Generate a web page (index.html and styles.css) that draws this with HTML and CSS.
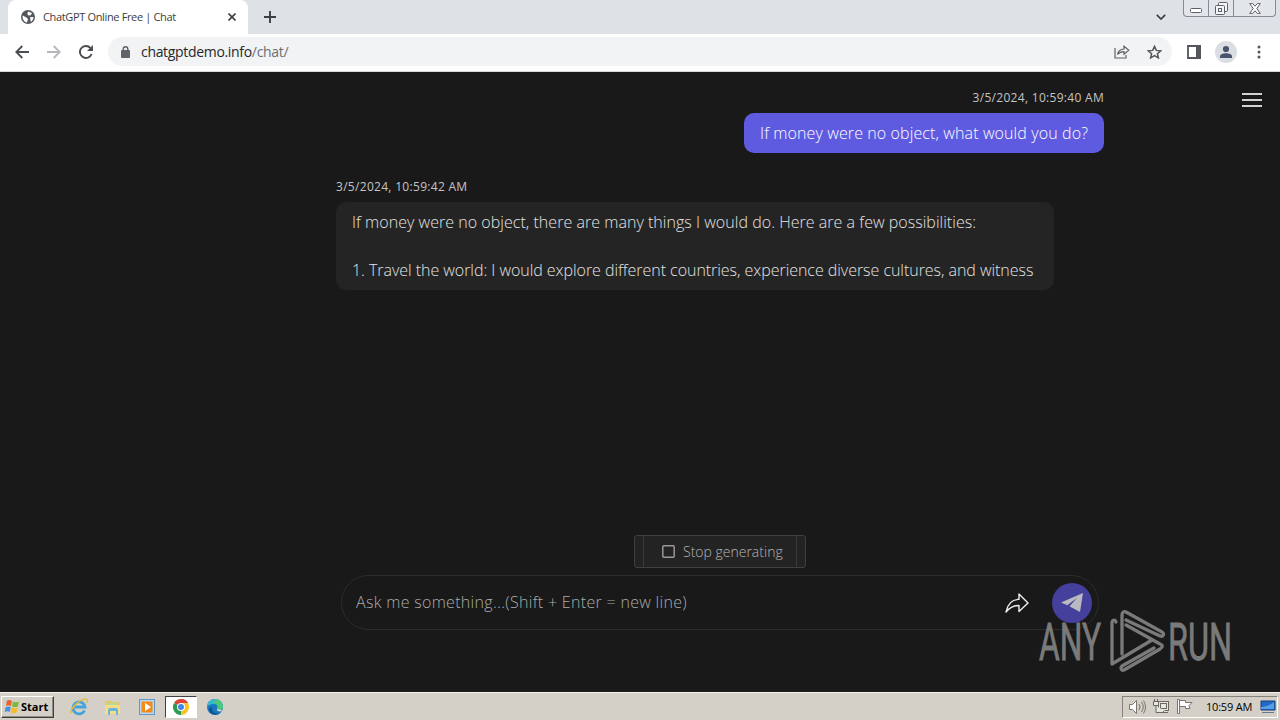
FILE: index.html
```
<!DOCTYPE html>
<html lang="en">
<head>
    <meta charset="UTF-8">
    <meta name="viewport" content="width=device-width, initial-scale=1.0">
    <title>ChatGPT Online Free | Chat</title>
    <link rel="stylesheet" href="styles.css">
</head>
<body>

<div class="tabstrip">
    <div class="tab">
        <svg class="favicon" width="14" height="14" viewBox="0 0 14 14"><circle cx="7" cy="7" r="7" fill="#54585c"/><path d="M1.6 5.5L5 7.2 7 9l-1 3.4C3 12 1.3 9.500 1.600 5.500zM7 1.600l4 1.400-1.300 2.200L7.500 5.600 6.300 4zM9 7.300l3.500-.3c0 2-1 3.800-2.700 4.900z" fill="#fff"/></svg>
        <span class="tab-title">ChatGPT Online Free | Chat</span>
        <svg class="tab-close" width="8" height="8" viewBox="0 0 8 8"><path d="M.5 .5l7 7M7.500.5l-7 7" stroke="#3c4043" stroke-width="1.600"/></svg>
    </div>
    <svg class="new-tab" width="12" height="12" viewBox="0 0 12 12"><path d="M6 0v12M0 6h12" stroke="#3c4043" stroke-width="1.900"/></svg>
    <svg class="chevron" width="10" height="6" viewBox="0 0 10 6"><path d="M.8.800L5 5 9.200.8" fill="none" stroke="#3c4043" stroke-width="1.700"/></svg>
    <div class="window-buttons">
        <span class="minimize"><svg width="12" height="5" viewBox="0 0 12 5"><rect x=".5" y=".5" width="11" height="4" rx="1" fill="#fff" stroke="#5c6068"/></svg></span>
        <span class="restore"><svg width="13" height="13" viewBox="0 0 13 13" fill="#f4f5f7" stroke="#5c6068"><rect x="3.500" y=".5" width="9" height="9" rx="1"/><rect x=".5" y="3.500" width="9" height="9" rx="1"/><rect x="3.500" y="6.500" width="3" height="3"/></svg></span>
        <span class="close"><svg width="12" height="11" viewBox="0 0 12 11"><path d="M.7.600h3L6 3.200 8.300.6h3L7.800 5.500l3.500 4.900h-3L6 7.800l-2.300 2.600h-3L4.200 5.500z" fill="#fff" stroke="#5c6068"/></svg></span>
    </div>
</div>

<div class="toolbar">
    <svg class="back" width="14" height="14" viewBox="0 0 14 14" fill="none" stroke="#4a4d51" stroke-width="1.800"><path d="M14 7H1.500M7.300 1L1.300 7l6 6"/></svg>
    <svg class="forward" width="14" height="14" viewBox="0 0 14 14" fill="none" stroke="#b5b7ba" stroke-width="1.800"><path d="M0 7h12.500M6.700 1l6 6-6 6"/></svg>
    <svg class="reload" width="14" height="14" viewBox="0 0 14 14"><path d="M12.600 9A6 6 0 1 1 11.300 2.800L13 4.500" fill="none" stroke="#4a4d51" stroke-width="1.900"/><path d="M14 0v6H8z" fill="#4a4d51"/></svg>
    <div class="omnibox">
        <svg class="lock" width="9" height="12" viewBox="0 0 9 12"><rect y="4" width="9" height="8" rx="1" fill="#5f6368"/><path d="M2.200 5V3a2.300 2.300 0 0 1 4.600 0v2" fill="none" stroke="#5f6368" stroke-width="1.400"/></svg>
        <span class="url">chatgptdemo.info<span class="path">/chat/</span></span>
        <svg class="share-page" width="16" height="14" viewBox="0 0 16 14" fill="none" stroke="#5f6368" stroke-width="1.200"><path d="M1 3v10h11v-3"/><path d="M3.500 9.500C4 6 6 4.200 10 4V1.200L14.800 5.300 10 9.300V6.600C7 6.600 5 7.500 3.500 9.500z"/></svg>
        <svg width="15" height="14" viewBox="0 0 15 14"><path d="M7.500 1.400l1.800 4 4.400.4-3.300 2.900 1 4.200-3.900-2.200-3.900 2.200 1-4.200L1.300 5.800l4.400-.4z" fill="none" stroke="#53575c" stroke-width="1.500"/></svg>
    </div>
    <svg class="side-panel" width="14" height="14" viewBox="0 0 14 14"><path d="M1 1h12v12H1z" fill="#fff" stroke="#53575c" stroke-width="1.800"/><path d="M9 0h5v14H9z" fill="#53575c"/></svg>
    <svg class="avatar" width="22" height="22" viewBox="0 0 22 22"><circle cx="11" cy="11" r="11" fill="#dadde2"/><g fill="#485370"><circle cx="11" cy="8" r="3.100"/><path d="M5 17v-1.500c0-2.200 3-3.300 6-3.300s6 1.100 6 3.300V17z"/></g></svg>
    <svg class="dots" width="4" height="14" viewBox="0 0 4 14" fill="#53575c"><circle cx="2" cy="2" r="1.500"/><circle cx="2" cy="7" r="1.500"/><circle cx="2" cy="12" r="1.500"/></svg>
</div>

<div class="page">
    <div class="hamburger"><i></i><i></i><i></i></div>

    <div class="chat">
        <div class="message mine">
            <div class="time">3/5/2024, 10:59:40 AM</div>
            <div class="bubble"><p class="question">If money were no object, what would you do?</p></div>
        </div>
        <div class="message">
            <div class="time">3/5/2024, 10:59:42 AM</div>
            <div class="bubble">
                <p class="intro">If money were no object, there are many things I would do. Here are a few possibilities:</p>
                <p class="item">1. Travel the world: I would explore different countries, experience diverse cultures, and witness</p>
            </div>
        </div>
    </div>

    <div class="composer">
        <div class="stop">
            <div class="stop-inner">
                <svg width="13" height="13" viewBox="0 0 13 13"><rect x=".8" y=".8" width="11.400" height="11.400" rx="1" fill="none" stroke="#999" stroke-width="1.500"/></svg>
                <span>Stop generating</span>
            </div>
        </div>
        <div class="input">
            <span class="placeholder">Ask me something...(Shift + Enter = new line)</span>
            <svg class="share" width="24" height="20" viewBox="0 0 24 20"><path d="M1 19C2.500 11 6 6.500 14 6.300V1l9 9-9 8.500v-6C8 12.500 4.500 14.500 1 19z" fill="none" stroke="#eee" stroke-width="1.400" stroke-linejoin="round"/></svg>
            <div class="send"><svg width="22" height="20" viewBox="0 0 22 20"><path d="M22 0L0 9.500l6.300 2.700L16 5 8.800 13v.5L19 19z" fill="#b9b9bf"/></svg></div>
        </div>
    </div>

    <svg class="watermark" width="204" height="64" viewBox="0 0 204 64">
        <g class="watermark-text">
            <text x="1" y="51" textLength="62" lengthAdjust="spacingAndGlyphs">ANY</text>
            <text x="130" y="51" textLength="64" lengthAdjust="spacingAndGlyphs">RUN</text>
        </g>
        <g fill="none" stroke="#808080" stroke-width="3.300" stroke-linejoin="round" stroke-linecap="round">
            <path d="M78 13c-1-3-4-2-4 1v41l40-24"/>
            <path d="M84 45V6c0-3 2-4 4-3l36 20c3 2 1 5-2 4L88 11"/>
            <path d="M88 16l34 19c3 1 3 3 0 5L86 61c-3 1-4-2-2-4l32-18"/>
        </g>
    </svg>
</div>

<div class="taskbar">
    <div class="start">
        <svg width="16" height="15" viewBox="0 0 16 15"><path d="M3 1.500Q5.500.3 8 2L7 7Q4.500 5.500 2 6.800z" fill="#e9632b"/><path d="M9 2.500q3 1.500 6 0l-1.200 5Q11 8.600 8 7.400z" fill="#7cb83c"/><path d="M1.700 8q2.500-1.200 5 0l-1 5Q3 11.500.6 13z" fill="#4b8fe0"/><path d="M7.800 8.500q3 1.300 5.800 0l-1 5Q9.500 15 6.800 13.500z" fill="#f4bd26"/></svg>
        <span>Start</span>
    </div>
    <div class="task"><svg width="18" height="18" viewBox="0 0 18 18"><path d="M14.500 12.500A6 6 0 1 1 15 9H5" fill="none" stroke="#43a3dc" stroke-width="2.800"/><path d="M1 15.500C-1 11 12-1 17 1.500c1 .8.500 2-.3 3.500" fill="none" stroke="#e8b935" stroke-width="1.400"/></svg></div>
    <div class="task"><svg width="18" height="16" viewBox="0 0 18 16"><path d="M1 2h6l1 1h8v4H1z" fill="#e7c766"/><path d="M3 4h11v4H3z" fill="#b6dc92"/><path d="M1 6h15v9H1z" fill="#f5dc87"/><path d="M4 16v-5q0-2 2-2h6q2 0 2 2v5h-2v-4H6v4z" fill="#68b5dd"/></svg></div>
    <div class="task"><svg width="16" height="16" viewBox="0 0 16 16"><rect x=".5" y=".5" width="15" height="15" fill="#b7d8f0" stroke="#6097c6"/><rect x="2.500" y="2.500" width="11" height="11" fill="#f38b1c"/><path d="M6 4l6 4-6 4z" fill="#fff"/></svg></div>
    <div class="task active"><svg width="16" height="16" viewBox="0 0 16 16"><path d="M8 8L1.070 4A8 8 0 0 1 14.930 4z" fill="#dc4437"/><path d="M8 8l6.930-4A8 8 0 0 1 8 16z" fill="#f6c52c"/><path d="M8 8v8A8 8 0 0 1 1.070 4z" fill="#2c9c50"/><path d="M8 4h6.930L11.500 10z" fill="#f6c52c"/><path d="M8 4h6.930A8 8 0 0 0 8 0z" fill="#dc4437"/><circle cx="8" cy="8" r="4" fill="#fff"/><circle cx="8" cy="8" r="3" fill="#4285e8"/></svg></div>
    <div class="task"><svg width="16" height="16" viewBox="0 0 16 16"><circle cx="8" cy="8" r="8" fill="#1877bd"/><path d="M0 8a8 8 0 0 1 16 0c0 3-5 4-6 2 1-1 1-5-3-5-3 0-6 1-7 3z" fill="#37b9ce"/><path d="M9 .1A8 8 0 0 1 16 8c0 3-5 4-6 2 2-3 0-6-4-6z" fill="#4fc979"/><path d="M10 10c-1 2 3 3.500 5.300 1.500L13 10.500z" fill="#d4d0c8"/><path d="M5 8c-1 4 3 8 8 6-3 3-10 2-11-3 0-2 1-3 3-3z" fill="#125292"/></svg></div>
    <div class="tray">
        <svg class="volume" width="17" height="14" viewBox="0 0 17 14" fill="none" stroke="#77756f"><path d="M.5 4.500h3l4-4v13l-4-4h-3z" fill="#fff"/><path d="M10 4q2 3 0 6M12.500 2q3.500 5 0 10M14.500.5q4 6.500 0 13"/></svg>
        <svg class="network" width="17" height="15" viewBox="0 0 17 15" fill="#e9e7e1" stroke="#6a6862"><rect x="5.500" y="2.500" width="10" height="9"/><rect x="7.500" y="4.500" width="6" height="5"/><path d="M.5 2.500h5v4h-5zM1.500 0v2M4.500 0v2M3 7v6.500h12M10.500 12v2"/></svg>
        <svg class="flag" width="17" height="15" viewBox="0 0 17 15" fill="#fff" stroke="#77756f"><path d="M.5.500h2v14h-2z"/><path d="M2.500 1.500h6v2h6.500l-3 3 1 3H8.500v-2h-6z"/></svg>
        <span class="clock">10:59 AM</span>
        <svg width="16" height="14" viewBox="0 0 16 14"><path d="M1 1h14v9H1z" fill="#226ac4" stroke="#123f7a"/><path d="M1 7q7 0 13-5v7H1z" fill="#58a1e8"/><path d="M2 12.500h12" stroke="#65788c"/></svg>
    </div>
</div>

</body>
</html>
```
FILE: styles.css
```
* {
    box-sizing: border-box;
}
body {
    margin: 0;
    width: 1280px;
    height: 720px;
    display: flex;
    flex-direction: column;
    overflow: hidden;
    font-family: "Open Sans", "Noto Sans", sans-serif;
    background-color: #191919;
    color: #e3e3e3;
}
svg {
    display: block;
    flex: none;
}
span, p, .time {
    white-space: nowrap;
}

/* browser */
.tabstrip {
    display: flex;
    align-items: center;
    height: 34px;
    padding-left: 8px;
    background-color: #dee1e6;
}
.tab {
    display: flex;
    align-items: center;
    width: 240px;
    height: 34px;
    padding: 0 12px 0 13px;
    border-radius: 8px 8px 0 0;
    background-color: #fff;
    color: #3c4043;
}
.tab-title {
    margin-top: -2px;
    margin-left: 8px;
    font-size: 11px;
    letter-spacing: -0.35px;
}
.tab-close {
    margin-left: auto;
}
.new-tab {
    margin-left: 16px;
}
.chevron {
    margin-left: auto;
    margin-right: 17px;
}
.window-buttons {
    display: flex;
    align-self: flex-start;
    width: 93px;
    height: 17px;
    margin-right: 4px;
    border: 1px solid #868b94;
    border-top: none;
    border-radius: 0 0 4px 4px;
    background-color: #e2e5ea;
}
.window-buttons span {
    display: flex;
    justify-content: center;
    align-items: center;
}
.minimize, .restore {
    width: 25px;
    border-right: 1px solid #868b94;
}
.minimize {
    padding-top: 5px;
}
.close {
    flex: 1;
}
.toolbar {
    display: flex;
    align-items: center;
    height: 38px;
    padding: 0 19px 2px 15px;
    border-bottom: 1px solid #d5d7da;
    background-color: #fff;
}
.forward {
    margin-left: 18px;
}
.reload {
    margin-left: 18px;
}
.omnibox {
    display: flex;
    align-items: center;
    width: 1064px;
    height: 29px;
    margin-left: 15px;
    padding: 0 10px 0 14px;
    border-radius: 15px;
    background-color: #f1f3f4;
}
.lock {
    margin-left: -1px;
}
.url {
    margin-left: 11px;
    font-size: 14px;
    letter-spacing: -0.32px;
    color: #24272a;
}
.path {
    color: #6b6f74;
}
.share-page {
    margin-left: auto;
    margin-right: 17px;
}
.side-panel {
    margin-left: 15px;
}
.avatar {
    margin-left: 14px;
}
.dots {
    margin-left: auto;
}

/* chat */
.page {
    position: relative;
    display: flex;
    flex-direction: column;
    align-items: center;
    height: 620px;
    padding-left: 160px;
}
.hamburger {
    position: absolute;
    top: 21px;
    right: 18px;
    display: grid;
    gap: 4px;
}
.hamburger i {
    width: 20px;
    height: 2px;
    background-color: #d2d2d2;
}
.chat {
    display: flex;
    flex-direction: column;
    gap: 24px;
    width: 768px;
    padding-top: 16px;
}
.message {
    display: flex;
    flex-direction: column;
    align-items: flex-start;
}
.mine {
    align-items: flex-end;
}
.time {
    height: 25px;
    font-size: 12px;
    line-height: 20px;
    letter-spacing: 0.3px;
    color: #c4c4c4;
}
.bubble {
    width: 718px;
    padding: 8px 16px;
    border-radius: 10px;
    background-color: #242424;
    font-size: 16px;
    font-weight: 300;
    line-height: 24px;
}
.mine .bubble {
    width: 360px;
    background-color: #5f5be0;
    color: #fff;
}
.bubble p {
    margin: 0;
}
.question {
    letter-spacing: 0.11px;
}
.intro {
    letter-spacing: 0.035px;
}
.bubble .item {
    margin-top: 24px;
    letter-spacing: -0.04px;
}
.composer {
    display: flex;
    flex-direction: column;
    align-items: center;
    gap: 7px;
    margin-top: auto;
    margin-bottom: 62px;
}
.stop {
    width: 172px;
    height: 33px;
    padding: 0 8px;
    border: 1px solid #404040;
    border-radius: 3px;
    background-color: #232323;
}
.stop-inner {
    display: flex;
    align-items: center;
    gap: 8px;
    height: 31px;
    padding-left: 18px;
    border-left: 1px solid #3a3a3a;
    border-right: 1px solid #3a3a3a;
    font-size: 14px;
    font-weight: 300;
    color: #b4b4b4;
}
.input {
    display: flex;
    align-items: center;
    width: 758px;
    height: 55px;
    padding: 0 6px 0 14px;
    border: 1px solid #2d2d2d;
    border-radius: 28px;
}
.placeholder {
    margin-top: -2px;
    font-size: 16px;
    font-weight: 300;
    letter-spacing: 0.31px;
    color: #ababab;
}
.share {
    margin-left: auto;
}
.send {
    display: flex;
    justify-content: center;
    align-items: center;
    width: 40px;
    height: 40px;
    margin-left: 23px;
    border-radius: 50%;
    background-color: #45409c;
}
.watermark {
    position: absolute;
    top: 537px;
    left: 1038px;
    opacity: 0.95;
}
.watermark-text {
    font-family: Roboto, sans-serif;
    font-size: 51px;
    fill: #808080;
    stroke: #808080;
    stroke-width: 0.8px;
}

/* taskbar */
.taskbar {
    display: flex;
    align-items: center;
    height: 28px;
    padding: 0 2px 0 1px;
    border-top: 1px solid #f4f2ee;
    background-color: #d4d0c8;
    color: #000;
}
.start {
    display: flex;
    align-items: center;
    gap: 1px;
    width: 53px;
    height: 22px;
    padding-left: 2px;
    border: 1px solid;
    border-color: #fff #404040 #404040 #fff;
    box-shadow: inset -1px -1px #908d86;
    font-size: 11px;
    font-weight: 700;
}
.task {
    display: flex;
    justify-content: center;
    align-items: center;
    width: 32px;
    height: 22px;
    margin-right: 2px;
}
.start + .task {
    margin-left: 9px;
}
.active {
    border: 1px solid;
    border-color: #404040 #fff #fff #404040;
    background-color: #fff;
}
.tray {
    display: flex;
    align-items: center;
    width: 156px;
    height: 22px;
    margin-left: auto;
    padding-left: 6px;
    border: 1px solid;
    border-color: #85827b #fff #fff #85827b;
}
.network, .flag {
    margin-left: 7px;
}
.clock {
    width: 46px;
    margin-left: 12px;
    margin-right: 8px;
    font-size: 11px;
    letter-spacing: -0.2px;
}
```
